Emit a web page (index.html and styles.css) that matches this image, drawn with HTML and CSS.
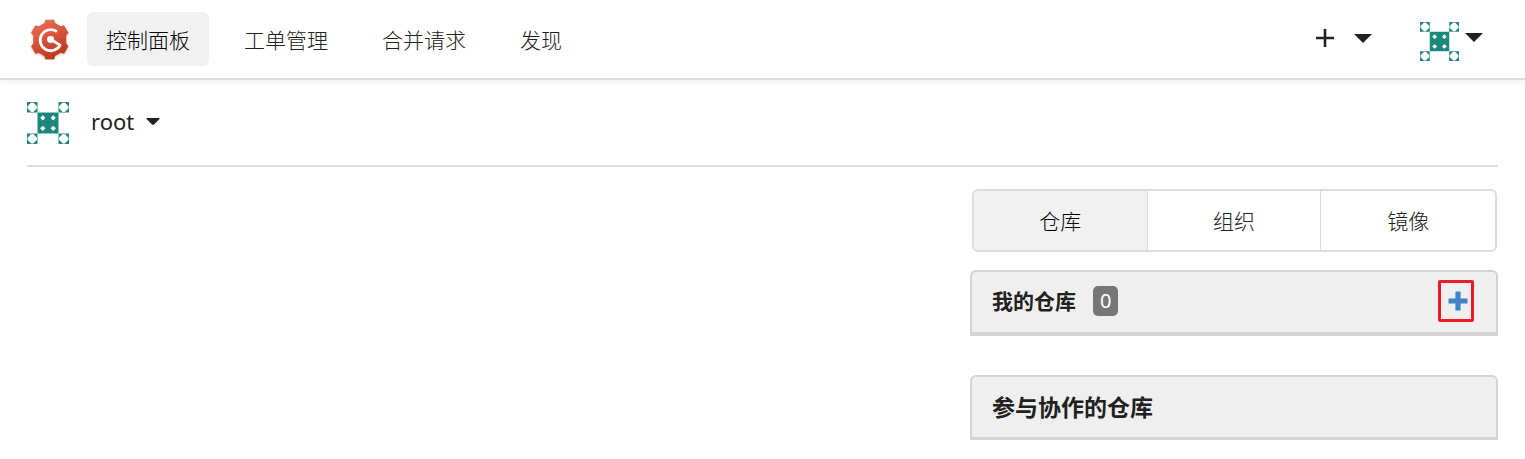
FILE: index.html
```html
<!DOCTYPE html>
<html lang="zh-CN">
<head>
<meta charset="utf-8">
<title>控制面板</title>
<link rel="stylesheet" href="styles.css">
</head>
<body>
<svg class="defs" aria-hidden="true">
  <defs>
    <symbol id="avatar" viewBox="0 0 40 40">
      <path fill="#1c887c" d="M10 10h20v20H10z"/>
      <path fill="#fff" d="M15 12.500l2.500 2.500L15 17.500l-2.500-2.500zM25 12.500l2.500 2.500L25 17.500l-2.500-2.500zM15 22.500l2.500 2.500L15 27.500l-2.500-2.500zM25 22.500l2.500 2.500L25 27.500l-2.500-2.500z"/>
      <path fill="#1c887c" fill-rule="evenodd" d="M0 0h10v10H0zM4 .5L.5 4v2L4 9.500h2L9.500 6V4L6 .5z"/>
      <path fill="#1c887c" fill-rule="evenodd" d="M30 0h10v10H30zM34 .5L30.500 4v2l3.500 3.500h2L39.500 6V4L36 .5z"/>
      <path fill="#1c887c" fill-rule="evenodd" d="M0 30h10v10H0zM4 30.500L.5 34v2L4 39.500h2L9.500 36v-2L6 30.500z"/>
      <path fill="#1c887c" fill-rule="evenodd" d="M30 30h10v10H30zM34 30.500L30.500 34v2l3.500 3.500h2l3.500-3.500v-2L36 30.500z"/>
    </symbol>
    <linearGradient id="gear" x1="0" y1="0" x2="0.400" y2="1">
      <stop offset="0" stop-color="#f0735a"/>
      <stop offset="1" stop-color="#bf3a20"/>
    </linearGradient>
  </defs>
</svg>

<header class="navbar">
  <a class="logo" href="#" aria-label="首页">
    <svg viewBox="0 0 40 40">
      <path class="gear" fill="url(#gear)" d="M16 .8h8.500l1 3 5.500 3.200 3.200-.8L38.500 13.500l-2.200 2.500v8l2.200 2.500-4.300 7.300-3.200-.8-5.500 3.200-1 3H16l-1-3L9.500 33l-3.200.8L2 26.500 4.200 24v-8L2 13.500 6.300 6.200l3.200.8L15 3.800z"/>
      <path fill="none" stroke="#fff" stroke-width="2.700" stroke-linecap="round" stroke-linejoin="round" d="M26.300 11.700A10.300 10.300 0 1 0 30.300 25.500L21.500 20"/>
      <circle cx="21" cy="20" r="3.400" fill="#fff"/>
    </svg>
  </a>
  <nav class="menu">
    <a class="item active" href="#">控制面板</a>
    <a class="item" href="#">工单管理</a>
    <a class="item" href="#">合并请求</a>
    <a class="item" href="#">发现</a>
  </nav>
  <div class="actions">
    <button class="create" type="button" aria-label="创建">
      <svg class="plus" viewBox="0 0 18 18"><path d="M7.700 0h2.600v7.700H18v2.600h-7.700V18H7.700v-7.700H0V7.700h7.700z"/></svg>
      <svg class="caret" viewBox="0 0 18 9"><path d="M0 0h18L9 9z"/></svg>
    </button>
    <button class="profile" type="button" aria-label="用户">
      <svg class="avatar"><use href="#avatar"/></svg>
      <svg class="caret" viewBox="0 0 18 9"><path d="M0 0h18L9 9z"/></svg>
    </button>
  </div>
</header>

<main class="dashboard">
  <div class="context">
    <button class="switcher" type="button">
      <svg class="avatar large"><use href="#avatar"/></svg>
      <span class="name">root
        <svg class="caret small" viewBox="0 0 14 7"><path d="M1 0h12q1 0 .5 1L8 6.500q-1 .8-2 0L.5 1Q0 0 1 0z"/></svg>
      </span>
    </button>
  </div>
  <div class="columns">
    <section class="feed"></section>
    <aside class="sidebar">
      <div class="tabs">
        <button class="tab active" type="button">仓库</button>
        <button class="tab" type="button">组织</button>
        <button class="tab" type="button">镜像</button>
      </div>
      <h4 class="panel">
        <span>我的仓库</span>
        <span class="count">0</span>
        <a class="add" href="#" aria-label="创建仓库">
          <svg viewBox="0 0 20 20"><path d="M8 .5h4q.6 0 .6.600v6.300h6.300q.6 0 .6.600v4q0 .6-.6.600h-6.300v6.300q0 .6-.6.600H8q-.6 0-.6-.6v-6.300H1.100q-.6 0-.6-.6V8q0-.6.600-.6h6.300V1.100q0-.6.600-.6z"/></svg>
        </a>
      </h4>
      <h4 class="panel shared">参与协作的仓库</h4>
    </aside>
  </div>
</main>
</body>
</html>
```
FILE: styles.css
```css
* {
  box-sizing: border-box;
}

body {
  margin: 0;
  background: #fff;
  color: #212121;
  font: 300 21px/30px "Noto Sans", "Noto Sans CJK SC", sans-serif;
}

button {
  padding: 0;
  border: 0;
  background: none;
  color: inherit;
  font: inherit;
  cursor: pointer;
}

a {
  color: inherit;
  text-decoration: none;
}

svg {
  display: block;
}

.defs {
  position: absolute;
  width: 0;
  height: 0;
}

.navbar {
  display: flex;
  align-items: center;
  padding: 12px 42px 12px 29px;
  border-bottom: 2px solid #dcdcdc;
  box-shadow: 0 2px 5px rgba(0, 0, 0, 0.06);
}

.logo svg {
  width: 41px;
  height: 41px;
}

.gear {
  filter: drop-shadow(0 1px 1px rgba(190, 60, 30, 0.4));
}

.menu {
  display: flex;
  gap: 16px;
  margin-left: 17px;
}

.item {
  padding: 13px 19px 11px;
  border-radius: 6px;
}

.item.active {
  background: #f1f1f1;
  color: #000;
}

.actions {
  display: flex;
  align-items: center;
  gap: 48px;
  margin-left: auto;
}

.create,
.profile {
  display: flex;
  align-items: center;
}

.create {
  gap: 20px;
  margin-bottom: 2px;
}

.profile {
  gap: 6px;
}

.profile .caret {
  margin-bottom: 4px;
}

.plus {
  width: 18px;
  height: 18px;
}

.caret {
  width: 18px;
  height: 9px;
}

.caret,
.plus {
  fill: #212121;
}

.caret.small {
  width: 14px;
  height: 7px;
}

.avatar {
  width: 39px;
  height: 39px;
  margin-top: 4px;
}

.avatar.large {
  width: 42px;
  height: 42px;
  margin: 0;
}

.dashboard {
  padding: 22px 27px 19px;
}

.context {
  padding-bottom: 21px;
  border-bottom: 2px solid #dcdcdc;
}

.switcher {
  display: flex;
  align-items: center;
  gap: 22px;
  font-weight: 400;
}

.name {
  display: flex;
  align-items: center;
  gap: 12px;
  padding-bottom: 4px;
  font-size: 22px;
}

.columns {
  display: grid;
  grid-template-columns: 25fr 14fr;
  padding-top: 22px;
}

.tabs {
  display: grid;
  grid-template-columns: 1fr 1fr 1fr;
  margin: 0 1px 18px 2px;
  border: 2px solid #dcdcdc;
  border-radius: 6px;
  overflow: hidden;
}

.tab {
  padding: 15px 0 14px;
  border-right: 1px solid #dcdcdc;
}

.tab:last-child {
  border-right: 0;
}

.tab.active {
  background: #f1f1f1;
  color: #000;
}

.panel {
  display: flex;
  align-items: center;
  margin: 0;
  padding: 8px 22px 10px 20px;
  border: 2px solid #d4d4d4;
  border-bottom-width: 4px;
  border-radius: 6px 6px 0 0;
  background: #efefef;
  font-size: 21px;
  font-weight: 700;
}

.count {
  margin-left: 17px;
  padding: 0 7px;
  border-radius: 5px;
  background: #767676;
  color: #fff;
  font-size: 20px;
  font-weight: 400;
}

.add {
  display: grid;
  place-items: center;
  width: 36px;
  height: 42px;
  margin-left: auto;
  padding-left: 3px;
  border: 3px solid #ed1c24;
  border-radius: 2px;
}

.add svg {
  width: 20px;
  height: 20px;
  fill: #4183c4;
}

.panel.shared {
  margin-top: 39px;
  padding: 15px 20px;
  border-bottom-width: 3px;
  font-size: 23px;
}
```
